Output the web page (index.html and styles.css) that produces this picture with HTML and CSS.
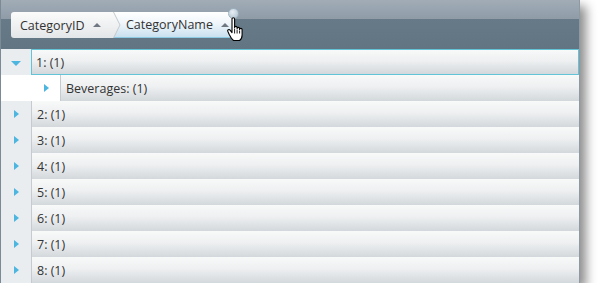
FILE: index.html
```html
<!DOCTYPE html>
<html lang="en">
<head>
    <meta charset="UTF-8">
    <title>Grid grouping</title>
    <link rel="stylesheet" href="styles.css">
</head>
<body>
    <div class="grid">
        <div class="group_panel">
            <div class="chip first">
                CategoryID <span class="sort"></span>
            </div>
            <div class="chip second">
                <svg class="chevron" width="9" height="26" viewBox="0 0 9 26">
                    <defs>
                        <linearGradient id="g1" x1="0" y1="0" x2="0" y2="1">
                            <stop offset="0" stop-color="#fbfbfb"/>
                            <stop offset="1" stop-color="#e3e6e8"/>
                        </linearGradient>
                    </defs>
                    <polygon points="0,0 1.5,0 8,13 1.5,26 0,26" fill="url(#g1)"/>
                    <polyline points="1.5,0 8,13 1.5,26" fill="none" stroke="#c3c9ce" stroke-width="1"/>
                </svg>
                <span class="label">CategoryName</span> <span class="sort"></span>
                <span class="close"></span>
                <svg class="hand" width="18" height="26" viewBox="0 0 18 26">
                    <path d="M5 2c0-1.6 2.6-1.6 2.6 0v8.5c0-1.5 2.5-1.5 2.5 0v1c0-1.5 2.5-1.5 2.5 0v1c0-1.5 2.5-1.5 2.5 0v5.5c0 2.6-1.2 4.6-2.6 5.5h-6c-1.6-1.2-3-3.2-4.4-6.2l-1.3-3c-.6-1.5 1.3-2.4 2.3-1.1l1.9 2.4z" fill="#fff" stroke="#000" stroke-width="1.1" stroke-linejoin="round"/>
                    <path d="M7.6 11.5v5M10.1 12.5v4M12.6 13.5v3" stroke="#000" stroke-width="0.9"/>
                </svg>
            </div>
        </div>

        <div class="row expanded">
            <div class="gutter"><span class="tri down"></span></div>
            <div class="cell">1: (1)</div>
        </div>
        <div class="row sub">
            <div class="gutter white"></div>
            <div class="gutter white"><span class="tri"></span></div>
            <div class="cell">Beverages: (1)</div>
        </div>
        <div class="row">
            <div class="gutter"><span class="tri"></span></div>
            <div class="cell">2: (1)</div>
        </div>
        <div class="row">
            <div class="gutter"><span class="tri"></span></div>
            <div class="cell">3: (1)</div>
        </div>
        <div class="row">
            <div class="gutter"><span class="tri"></span></div>
            <div class="cell">4: (1)</div>
        </div>
        <div class="row">
            <div class="gutter"><span class="tri"></span></div>
            <div class="cell">5: (1)</div>
        </div>
        <div class="row">
            <div class="gutter"><span class="tri"></span></div>
            <div class="cell">6: (1)</div>
        </div>
        <div class="row">
            <div class="gutter"><span class="tri"></span></div>
            <div class="cell">7: (1)</div>
        </div>
        <div class="row">
            <div class="gutter"><span class="tri"></span></div>
            <div class="cell">8: (1)</div>
        </div>
    </div>
</body>
</html>
```

FILE: styles.css
```css
body{
    margin: 0;
    padding: 0;
    background-color: #ffffff;
}
*{
    box-sizing: border-box;
    font-family: "Open Sans", "DejaVu Sans", sans-serif;
}
.grid{
    width: 580px;
    height: 283px;
    border-left: 1px solid #7b8a96;
    border-right: 1px solid #8d9aa4;
    background-color: #e9edf0;
    box-shadow: 6px 6px 10px rgba(0, 0, 0, 0.45);
    overflow: hidden;
}
.group_panel{
    height: 49px;
    padding: 12px 0px 0px 10px;
    display: flex;
    background: linear-gradient(#a1acb6 0px, #8f9ca8 19px, #677a88 19px, #627583 49px);
}
.chip{
    height: 26px;
    display: flex;
    align-items: center;
    font-size: 12.5px;
    color: #333333;
    position: relative;
}
.chip.first{
    padding-left: 9px;
    width: 101px;
    border-radius: 3px 0px 0px 3px;
    background: linear-gradient(#fbfbfb, #e3e6e8);
}
.chip.second{
    width: 120px;
    border-radius: 0px 3px 3px 0px;
    background: linear-gradient(#ffffff 0%, #f0f6fa 45%, #c9e1ef 100%);
    border-bottom: 1px solid #8ccbe3;
}
.chip .chevron{
    align-self: flex-start;
    margin-right: 5px;
}
.sort{
    width: 0;
    height: 0;
    margin-left: 8px;
    border-left: 4px solid transparent;
    border-right: 4px solid transparent;
    border-bottom: 4px solid #6f7880;
}
.chip .close{
    position: absolute;
    right: -7px;
    top: -4px;
    width: 11px;
    height: 11px;
    border-radius: 50%;
    background: radial-gradient(circle at 40% 35%, #e8eff4, #a9bccb);
    border: 1px solid #9fb1be;
}
.chip .hand{
    position: absolute;
    right: -13px;
    top: 5px;
}
.row{
    height: 26px;
    display: flex;
}
.gutter{
    width: 30px;
    flex-shrink: 0;
    display: flex;
    align-items: center;
    justify-content: center;
    background-color: #e9edf0;
}
.gutter.white{
    width: 29px;
    background-color: #ffffff;
}
.row.sub .gutter.white:first-child{
    width: 30px;
}
.cell{
    flex-grow: 1;
    display: flex;
    align-items: center;
    padding-left: 5px;
    font-size: 12.5px;
    color: #333333;
    border-left: 1px solid #c5cbd0;
    background: linear-gradient(#f8f9f9, #eef0f1 45%, #d3d8dc);
}
.row.expanded .cell{
    border: 1px solid #63c3d7;
    padding-left: 4px;
}
.tri{
    width: 0;
    height: 0;
    border-top: 4px solid transparent;
    border-bottom: 4px solid transparent;
    border-left: 5px solid #4cb6e0;
    margin-left: 1px;
}
.tri.down{
    border-left: 5px solid transparent;
    border-right: 5px solid transparent;
    border-top: 5px solid #4cb6e0;
    border-bottom: none;
    margin-left: 0px;
    margin-top: 2px;
}
```
